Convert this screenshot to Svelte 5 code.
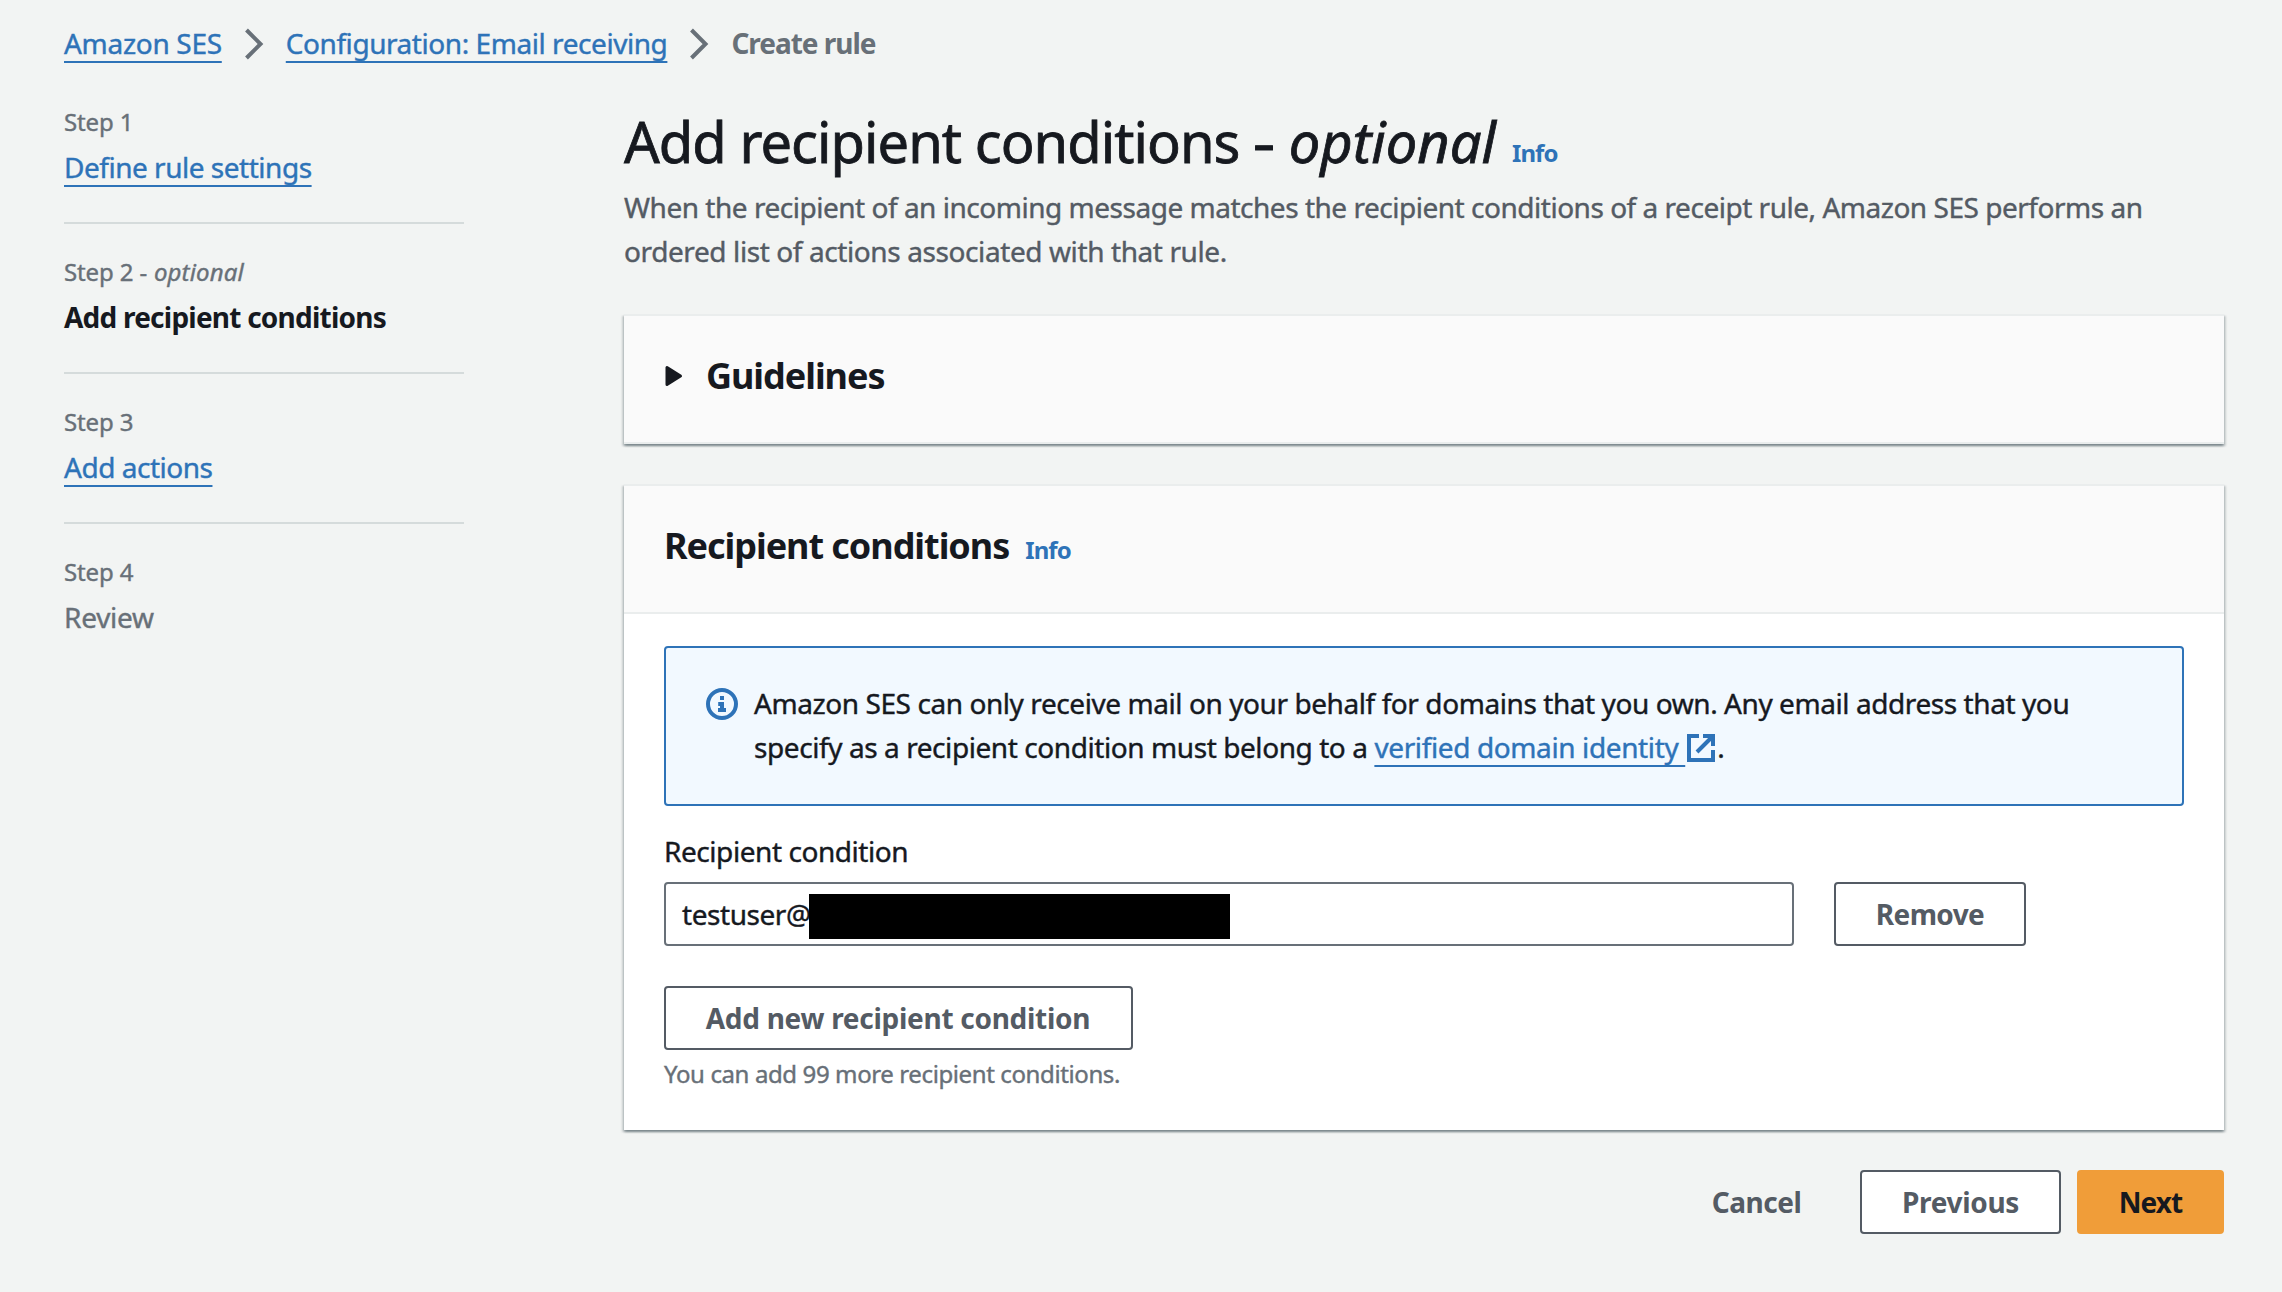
<script>
  const steps = [
    { label: 'Step 1', title: 'Define rule settings', state: 'link' },
    { label: 'Step 2', optional: true, title: 'Add recipient conditions', state: 'active' },
    { label: 'Step 3', title: 'Add actions', state: 'link' },
    { label: 'Step 4', title: 'Review', state: 'disabled' }
  ];
</script>

{#snippet chevron()}
  <svg class="chevron" width="20" height="32" viewBox="0 0 20 32" aria-hidden="true">
    <path d="M2.5 2 L16.5 16 L2.5 30" />
  </svg>
{/snippet}

<div class="page">
  <nav class="breadcrumbs">
    <a class="link crumb-one" href="#ses">Amazon SES</a>
    {@render chevron()}
    <a class="link" href="#receiving">Configuration: Email receiving</a>
    {@render chevron()}
    <span class="current">Create rule</span>
  </nav>

  <div class="layout">
    <ul class="steps">
      {#each steps as step}
        <li>
          <div class="step-label">{step.label}{#if step.optional}<span class="step-optional">{' - '}<i>optional</i></span>{/if}</div>
          <div class="step-title {step.state}">
            {#if step.state === 'link'}<a class="link" href="#step">{step.title}</a>{:else}{step.title}{/if}
          </div>
        </li>
      {/each}
    </ul>

    <main>
      <h1><span>Add recipient conditions <span class="dash">-</span> <i>optional</i></span><a class="info" href="#info">Info</a></h1>
      <p class="description">
        When the recipient of an incoming message matches the recipient conditions of a receipt rule, Amazon SES performs an<br />
        <span class="second-line">ordered list of actions associated with that rule.</span>
      </p>

      <section class="card">
        <div class="card-header">
          <svg class="caret" width="18" height="22" viewBox="0 0 18 22" aria-hidden="true">
            <path d="M2 2.5 L2 19.5 L15.5 11 Z" />
          </svg>
          <h2>Guidelines</h2>
        </div>
      </section>

      <section class="card">
        <div class="card-header">
          <h2>Recipient conditions</h2><a class="info" href="#info">Info</a>
        </div>
        <div class="card-body">
          <div class="alert">
            <svg class="alert-icon" width="32" height="32" viewBox="0 0 16 16" aria-hidden="true">
              <circle cx="8" cy="8" r="7" />
              <path d="M8 4v2M6.1 8H8V11M6 11h4M8 7v5" />
            </svg>
            <p>
              Amazon SES can only receive mail on your behalf for domains that you own. Any email address that you<br />
              specify as a recipient condition must belong to a <a class="link" href="#identity">verified domain identity&nbsp;</a><svg class="external" width="28" height="28" viewBox="0 0 28 28" aria-hidden="true">
                <path d="M12 2H2V26H26V16M16 2H26V12M26 2L10 18" />
              </svg>.
            </p>
          </div>

          <div class="field-label">Recipient condition</div>
          <div class="field-row">
            <div class="input"><span class="value">testuser@</span><span class="redacted"></span></div>
            <button class="button remove">Remove</button>
          </div>
          <button class="button add">Add new recipient condition</button>
          <div class="hint">You can add 99 more recipient conditions.</div>
        </div>
      </section>

      <footer>
        <button class="button cancel">Cancel</button>
        <button class="button previous">Previous</button>
        <button class="button primary">Next</button>
      </footer>
    </main>
  </div>
</div>

<style>
  :global(body) {
    margin: 0;
    background: #f2f4f3;
  }

  .page {
    box-sizing: border-box;
    width: 2282px;
    height: 1292px;
    padding: 21px 58px 0 64px;
    overflow: hidden;
    background: #f2f4f3;
    color: #16191f;
    font: 400 28px/44px "Noto Sans", "Open Sans", sans-serif;
    letter-spacing: -0.44px;
    -webkit-text-stroke: 0.4px;
  }

  h1, h2, p, ul {
    margin: 0;
    padding: 0;
    font-weight: inherit;
  }

  .link {
    color: #2e73b8;
    text-decoration: underline 2px;
    text-underline-offset: 7px;
    text-decoration-skip-ink: none;
  }

  .info {
    position: relative;
    top: -1px;
    color: #2e73b8;
    font-size: 24px;
    font-weight: 700;
    letter-spacing: -0.9px;
    text-decoration: none;
    -webkit-text-stroke: 0;
  }

  .breadcrumbs {
    display: flex;
    align-items: center;
    height: 44px;
  }

  .crumb-one {
    letter-spacing: -0.3px;
  }

  .chevron {
    flex: none;
    margin: 2px 22px 0;
    fill: none;
    stroke: #687078;
    stroke-width: 4;
  }

  .current {
    color: #687078;
    font-weight: 700;
    letter-spacing: -1.03px;
    -webkit-text-stroke: 0;
  }

  .layout {
    display: grid;
    grid-template-columns: 400px 1600px;
    column-gap: 160px;
    padding-top: 40px;
  }

  .steps {
    padding-top: 1px;
    list-style: none;
  }

  .steps li + li {
    margin-top: 33px;
    border-top: 2px solid #d5dbdb;
    padding-top: 32px;
  }

  .step-label {
    color: #687078;
    font-size: 24px;
    line-height: 32px;
    letter-spacing: -0.15px;
    white-space: pre;
  }

  .step-optional {
    letter-spacing: 0.15px;
  }

  .step-title {
    margin-top: 7px;
  }

  .step-title.link {
    color: inherit;
    text-decoration: none;
    letter-spacing: -0.48px;
  }

  .active {
    font-weight: 700;
    letter-spacing: -0.77px;
    -webkit-text-stroke: 0;
  }

  .disabled {
    color: #687078;
    letter-spacing: -0.25px;
  }

  h1 {
    display: flex;
    align-items: baseline;
    gap: 16px;
    height: 72px;
    font-size: 56px;
    line-height: 72px;
    letter-spacing: -0.95px;
    white-space: nowrap;
    -webkit-text-stroke: 0.8px;
  }

  h1 .dash {
    display: inline-block;
    margin: 0 3px 0 2px;
    transform: scaleX(1.25);
  }

  h1 i {
    letter-spacing: 0;
  }

  .description {
    margin-top: 8px;
    color: #545b64;
    letter-spacing: -0.48px;
    white-space: nowrap;
  }

  .second-line {
    letter-spacing: -0.4px;
  }

  .card {
    margin-top: 40px;
    border-top: 2px solid #eaeded;
    background: #fff;
    box-shadow: 0 2px 2px 0 rgba(0, 28, 36, 0.3), 2px 2px 2px 0 rgba(0, 28, 36, 0.15), -2px 2px 2px 0 rgba(0, 28, 36, 0.15);
  }

  .description + .card {
    margin-top: 41px;
  }

  .card-header {
    display: flex;
    align-items: baseline;
    gap: 16px;
    box-sizing: border-box;
    height: 128px;
    border-bottom: 2px solid #eaeded;
    padding: 38px 40px 0;
    background: #fafafa;
  }

  .card-header .info {
    top: 0;
  }

  h2 {
    font-size: 36px;
    font-weight: 700;
    letter-spacing: -1.05px;
    -webkit-text-stroke: 0;
  }

  .caret {
    align-self: flex-start;
    margin: 11px 7px 0 1px;
    fill: #16191f;
    stroke: #16191f;
    stroke-width: 3;
    stroke-linejoin: round;
  }

  .card-body {
    padding: 32px 40px 40px;
  }

  .alert {
    display: flex;
    gap: 16px;
    box-sizing: border-box;
    height: 160px;
    border: 2px solid #2e73b8;
    border-radius: 4px;
    padding: 33px 40px 0;
    background: #f2f9ff;
    letter-spacing: -0.425px;
    white-space: nowrap;
  }

  .alert .link {
    letter-spacing: -0.38px;
  }

  .alert-icon {
    flex: none;
    margin-top: 7px;
    fill: none;
    stroke: #2e73b8;
    stroke-width: 2;
  }

  .external {
    margin-left: 2px;
    margin-right: 2px;
    vertical-align: -4px;
    fill: none;
    stroke: #2e73b8;
    stroke-width: 4;
  }

  .field-label {
    margin-top: 23px;
  }

  .field-row {
    display: flex;
    gap: 40px;
    margin-top: 9px;
  }

  .input {
    display: flex;
    align-items: center;
    box-sizing: border-box;
    width: 1130px;
    height: 64px;
    border: 2px solid #687078;
    border-radius: 4px;
    padding-left: 16px;
  }

  .value {
    width: 127px;
  }

  .redacted {
    width: 421px;
    height: 45px;
    margin-top: 5px;
    background: #000;
  }

  .button {
    box-sizing: border-box;
    height: 64px;
    border: 2px solid #545b64;
    border-radius: 4px;
    padding: 0 0 1px;
    background: #fff;
    color: #545b64;
    font: inherit;
    font-weight: 700;
    line-height: 58px;
    text-align: center;
    white-space: nowrap;
    -webkit-text-stroke: 0;
  }

  .remove {
    width: 192px;
    letter-spacing: -0.6px;
  }

  .add {
    display: block;
    width: 469px;
    margin-top: 40px;
    padding-right: 1px;
    letter-spacing: -0.28px;
  }

  .hint {
    margin-top: 8px;
    color: #687078;
    font-size: 24px;
    line-height: 32px;
    letter-spacing: -0.39px;
  }

  footer {
    display: flex;
    justify-content: flex-end;
    margin-top: 40px;
  }

  .cancel {
    width: 171px;
    margin-right: 18px;
    border-color: transparent;
    background: transparent;
    letter-spacing: -0.5px;
  }

  .previous {
    width: 201px;
    margin-right: 16px;
    letter-spacing: -0.33px;
  }

  .primary {
    width: 147px;
    border-color: #f09d39;
    background: #f09d39;
    color: #16191f;
    letter-spacing: -1px;
  }
</style>
